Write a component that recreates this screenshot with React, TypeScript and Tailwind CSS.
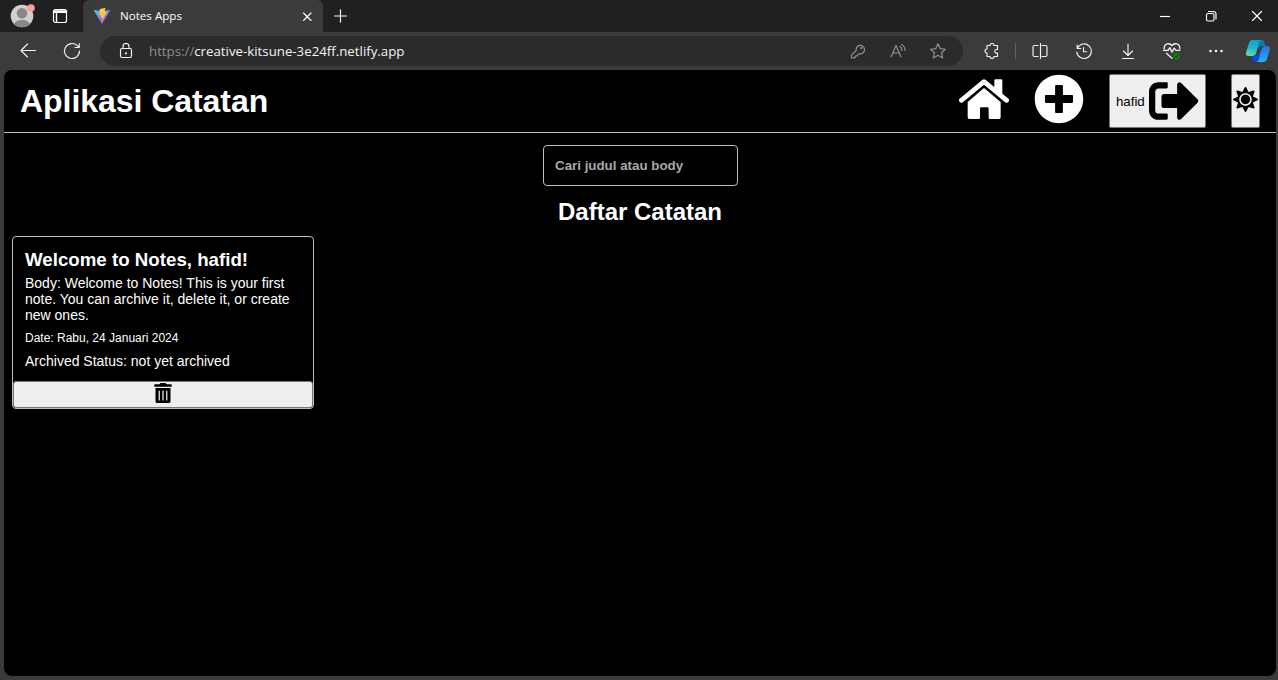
import React from "react";
import { FaPlusCircle, FaSignOutAlt, FaSun, FaTrashAlt } from "react-icons/fa";

type IconProps = { children: React.ReactNode; className?: string; size?: number };

function Line({ children, className = "", size = 16 }: IconProps) {
  return (
    <svg
      width={size}
      height={size}
      viewBox="0 0 16 16"
      fill="none"
      stroke="currentColor"
      strokeWidth="1.15"
      strokeLinecap="round"
      strokeLinejoin="round"
      className={"shrink-0 " + className}
    >
      {children}
    </svg>
  );
}

function ViteLogo() {
  return (
    <svg width="16" height="16" viewBox="0 0 32 32" className="shrink-0">
      <defs>
        <linearGradient id="vite-a" x1="0" y1="0" x2="0.6" y2="1">
          <stop offset="0" stopColor="#41d1ff" />
          <stop offset="1" stopColor="#bd34fe" />
        </linearGradient>
        <linearGradient id="vite-b" x1="0.4" y1="0" x2="0.6" y2="1">
          <stop offset="0" stopColor="#ffdd45" />
          <stop offset="1" stopColor="#ffa800" />
        </linearGradient>
      </defs>
      <path d="M31.800 5.600 16.900 31.200a1 1 0 0 1-1.700 0L.200 5.600a1 1 0 0 1 1-1.500L16 6.800l14.800-2.700a1 1 0 0 1 1 1.500Z" fill="url(#vite-a)" />
      <path d="M23 0 11.500 2.200 10.500 15l4-.8-1.200 6 3.300-.9-1.800 9L26 7.300l-4.700.9Z" fill="url(#vite-b)" />
    </svg>
  );
}

function Avatar() {
  return (
    <svg width="26" height="26" viewBox="0 0 26 26" className="shrink-0">
      <defs>
        <clipPath id="avatar"><circle cx="13" cy="13" r="11.300" /></clipPath>
      </defs>
      <circle cx="13" cy="13" r="11.300" fill="#d2d0ce" />
      <g clipPath="url(#avatar)" fill="#8a8886">
        <circle cx="13" cy="10.300" r="5.300" />
        <ellipse cx="13" cy="22" rx="8" ry="5.300" />
      </g>
      <circle cx="22" cy="5" r="3.800" fill="#f9a09b" />
    </svg>
  );
}

function Copilot() {
  return (
    <svg width="26" height="24" viewBox="0 0 26 24" className="shrink-0">
      <defs>
        <linearGradient id="cp-a" x1="0.5" y1="0" x2="0.3" y2="1">
          <stop offset="0" stopColor="#149ed2" />
          <stop offset="0.5" stopColor="#20b8cc" />
          <stop offset="1" stopColor="#65d99a" />
        </linearGradient>
        <linearGradient id="cp-b" x1="0.6" y1="0" x2="0.4" y2="1">
          <stop offset="0" stopColor="#2870dc" />
          <stop offset="1" stopColor="#16b7fb" />
        </linearGradient>
      </defs>
      <path d="M12 1h4.500c2 0 2.500 1 3 3l.8 3H17c-2 0-3 1-3.700 3L11 7Z" fill="#087f9d" />
      <path d="M6.500 16.500H12l4-6v12.500h-5c-2 0-3-1-3.500-3Z" fill="#1748d5" />
      <path d="M7.500 1H17c-2 0-2.800 1.500-3.300 3.500l-2.500 9.500C10.500 16 9 17 7 17H3.500C1 17 .5 15 1.200 12.800L4 4c.6-2 1.500-3 3.500-3Z" fill="url(#cp-a)" />
      <path d="M18.500 23H11c2 0 2.700-1.500 3.200-3.500l2.500-9.500C17.300 8 18.500 7 20.500 7h2c2.500 0 3 2 2.300 4.200L22 20c-.6 2-1.500 3-3.500 3Z" fill="url(#cp-b)" />
    </svg>
  );
}

function HomeIcon() {
  return (
    <svg width="50" height="50" viewBox="0 0 150 150" fill="currentColor">
      <path d="m7 79 68-56 68 56" fill="none" stroke="currentColor" strokeWidth="14" strokeLinecap="round" strokeLinejoin="round" />
      <path d="M106 20q0-4 4-4h16q4 0 4 4v48l-24-20Z" />
      <path d="m75 42 50 42v46q0 5-5 5H93q-4 0-4-4v-27q0-4-4-4H67q-4 0-4 4v27q0 4-4 4H31q-5 0-5-5V84Z" />
    </svg>
  );
}

function TitleBar() {
  return (
    <div className="flex h-8 bg-[#202020] text-white">
      <div className="flex w-[83px] shrink-0 items-center rounded-br-[3px] border-r border-[#191919] pl-[9px]">
        <Avatar />
        <Line className="ml-[17px]">
          <rect x="1.500" y="1.500" width="13" height="13" rx="2" />
          <path d="M1.500 3h13M1.500 4.300h13M4.500 5v9" strokeWidth="1.400" />
        </Line>
      </div>
      <div className="flex w-[240px] shrink-0 items-center rounded-t-md bg-[#3b3b3b] pl-[11px] pr-[8px]">
        <ViteLogo />
        <span className="ml-[10px] flex-1 whitespace-nowrap font-['Open_Sans','Noto_Sans',sans-serif] text-[11.6px]">Notes Apps</span>
        <Line><path d="m4.500 5 7.500 7.500M12 5l-7.500 7.500" /></Line>
      </div>
      <Line className="ml-[9px] mt-2"><path d="M8.500 1.500v13M2 8h13" strokeLinecap="butt" /></Line>
      <div className="flex flex-1 items-center justify-end gap-[30px] pr-[13px]">
        <Line><path d="M3 8.500h10" strokeLinecap="butt" /></Line>
        <Line>
          <rect x="3.500" y="5.500" width="7.500" height="7.500" rx="1.500" />
          <path d="M5.500 3.500h5a2.500 2.500 0 0 1 2.500 2.500v5" />
        </Line>
        <Line><path d="m3.500 3.500 9 9M12.500 3.500l-9 9" /></Line>
      </div>
    </div>
  );
}

function AddressBar() {
  return (
    <div className="flex h-[38px] items-center bg-[#3b3b3b] text-[#f3f3f3]">
      <Line className="ml-5"><path d="M15.500 7.500H1M7.500 1 1 7.500 7.500 14" /></Line>
      <Line className="ml-7 overflow-visible">
        <path d="M15.500 8A7.500 7.500 0 1 1 13.300 2.700l1.700 1.600M15.200.5v4h-4.300" />
      </Line>
      <div className="ml-5 flex h-[30px] w-[863px] shrink-0 items-center rounded-full bg-[#2b2b2b] pl-[18px] pr-[17px]">
        <Line>
          <rect x="2.500" y="5.500" width="11" height="9" rx="1.500" />
          <path d="M5 5.500V3.300a3 3 0 0 1 6 0v2.200" />
          <circle cx="8" cy="10.300" r=".5" fill="currentColor" />
        </Line>
        <div className="ml-[15px] flex-1 whitespace-nowrap pt-0.5 font-['Open_Sans','Noto_Sans',sans-serif] text-[13.27px]">
          <span className="text-[#8e8e8e]">https://</span><span>creative-kitsune-3e24ff.netlify.app</span>
        </div>
        <div className="flex items-center gap-6 text-[#929292]">
          <Line>
            <path d="M6.200 7.500a4.200 4.200 0 1 1 3.200 3.200l-1.700.8-.5 1.500H5.500l-.6 1.800H1.500v-2.700Z" />
            <circle cx="11.300" cy="5" r=".5" fill="currentColor" />
          </Line>
          <Line>
            <path d="M1 14 6 2.500 11 14M2.800 10h6.400M10 3.500a4.500 4.500 0 0 1 2 4M11.500 1.500A6.500 6.500 0 0 1 15 7.500" />
          </Line>
          <Line>
            <path d="m8 .8 2.200 4.800 5.200.6-3.900 3.500 1.100 5.200L8 12.300l-4.600 2.600 1.100-5.200L.6 6.200l5.200-.6Z" />
          </Line>
        </div>
      </div>
      <Line className="ml-[21px]">
        <path d="M3 2.500h3a2 2 0 0 1 4 0h3.500v4h-1a1.800 1.800 0 0 0 0 3.600h1v3.400H10a2 2 0 0 1-4 0H3V10a2 2 0 0 1 0-4Z" />
      </Line>
      <div className="ml-[15px] h-4 w-px bg-[#606060]" />
      <Line className="ml-4">
        <path d="M6 2.500H2.500a1.500 1.500 0 0 0-1.500 1.500v8a1.500 1.500 0 0 0 1.500 1.500H6M10 2.500h3.500A1.500 1.500 0 0 1 15 4v8a1.500 1.500 0 0 1-1.500 1.500H10M8.500.5v15" />
      </Line>
      <Line className="ml-7">
        <path d="M1.200 2v3.500h3.500M1.500 5A7.300 7.300 0 1 1 .8 9M7.500 4.500v4.200h3.200" />
      </Line>
      <Line className="ml-7"><path d="M8 1v11M3.500 8 8 12.500 12.500 8M2.500 15.500h11" /></Line>
      <Line className="ml-[27px] overflow-visible" size={18}>
        <path d="M1 6C1 1 6 .5 8 3.300 10 .5 15 1 15 6M.5 7.500h4L6 5l2 4 2-3.500 1.500 2H15M3 10l5 4.500" />
        <circle cx="12" cy="12.500" r="3.200" fill="#107c10" stroke="none" />
        <path d="m10.500 12.500 1 1 2-2" stroke="#073807" strokeWidth=".8" />
      </Line>
      <Line className="ml-[27px]">
        <g fill="currentColor" stroke="none">
          <circle cx="2.500" cy="8" r="1.300" /><circle cx="8" cy="8" r="1.300" /><circle cx="13.500" cy="8" r="1.300" />
        </g>
      </Line>
      <div className="ml-[21px]"><Copilot /></div>
    </div>
  );
}

export default function App() {
  return (
    <div className="flex h-[680px] w-[1278px] flex-col overflow-hidden bg-[#3b3b3b]">
      <TitleBar />
      <AddressBar />
      <div className="ml-1 mr-0.5 h-[606px] rounded-lg bg-black font-['Liberation_Sans',Arial,sans-serif] text-white">
        <header className="flex h-[63px] items-center justify-between border-b border-[#bdbdbd] px-4">
          <h1 className="text-[32px] font-bold leading-[37px] tracking-[-0.05px]">Aplikasi Catatan</h1>
          <nav className="flex h-[54px] items-center">
            <a href="#home" className="mr-[25px] pb-1"><HomeIcon /></a>
            <a href="#new" className="mr-[25px] pb-1"><FaPlusCircle size={50} /></a>
            <button className="mr-[25px] flex h-[54px] w-[97px] items-center justify-start gap-1 rounded-[2px] border border-[#767676] bg-[#efefef] pl-1.5 pt-px text-[13.333px] tracking-[-0.05px] text-black">
              hafid <FaSignOutAlt size={50} className="mb-px shrink-0" />
            </button>
            <button className="flex h-[54px] w-[29px] items-center justify-center rounded-[2px] border border-[#767676] bg-[#efefef] pb-[3px] text-black">
              <FaSun size={25} className="shrink-0" />
            </button>
          </nav>
        </header>
        <main className="flex flex-col px-2 pt-3">
          <input
            type="text"
            placeholder="Cari judul atau body"
            className="h-[41px] w-[195px] self-center rounded border border-[#bdbdbd] bg-black px-[11.5px] text-[13.333px] font-bold placeholder:text-[#a9a9a9]"
          />
          <h2 className="mt-3 text-center text-2xl font-bold leading-7">Daftar Catatan</h2>
          <article className="mt-[10px] flex w-[302px] flex-col rounded border border-[#bdbdbd]">
            <div className="px-3 pt-3">
              <h3 className="text-[18.72px] font-bold leading-[22px]">Welcome to Notes, hafid!</h3>
              <p className="mt-1 text-sm leading-4">Body: Welcome to Notes! This is your first note. You can archive it, delete it, or create new ones.</p>
              <p className="mt-2 text-xs leading-[14px]">Date: Rabu, 24 Januari 2024</p>
              <p className="mt-2 text-sm leading-4">Archived Status: not yet archived</p>
            </div>
            <button className="mt-3 flex h-[27px] items-start justify-center rounded-[3px] border border-[#767676] bg-[#efefef] pt-px text-black">
              <FaTrashAlt size={20} />
            </button>
          </article>
        </main>
      </div>
    </div>
  );
}
